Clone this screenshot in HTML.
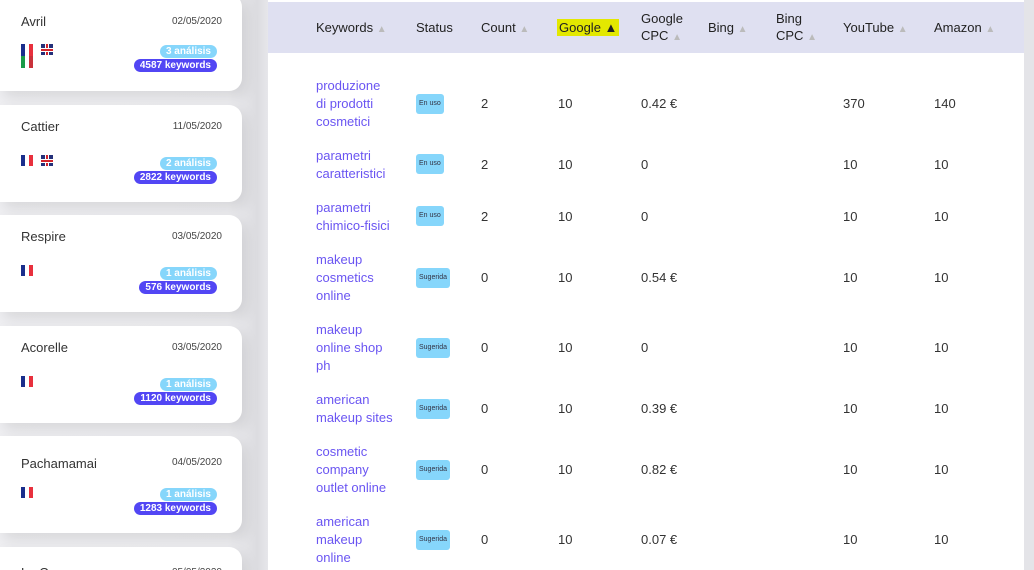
<!DOCTYPE html>
<html><head><meta charset="utf-8"><style>
*{margin:0;padding:0;box-sizing:border-box}
html,body{width:1034px;height:570px;overflow:hidden}
body{position:relative;font-family:"Liberation Sans",sans-serif;background:#e4e4e8;color:#333}
#left{position:absolute;left:0;top:0;width:268px;height:570px;overflow:hidden;background:linear-gradient(90deg,#efeff2 0%,#eeeef1 85%,#dcdce0 96%,#e6e6ea 100%)}
.card{position:absolute;left:0;width:242px;height:97px;background:#fff;border-radius:0 13px 13px 0;box-shadow:4px 6px 14px rgba(0,0,0,0.10)}
.card .n{position:absolute;left:21px;top:14px;font-size:13px;color:#333}
.card .d{position:absolute;right:20px;top:16px;font-size:10px;color:#444}
.fl{position:absolute;left:21px;top:50px;display:flex;gap:8px}
.fr{width:12px;height:11px;background:linear-gradient(90deg,#1a2e8c 0 33%,#fff 33% 66%,#e8303d 66%)}
.uk{width:12px;height:11px;background:#24307a;position:relative;overflow:hidden}
.uk:before{content:"";position:absolute;left:5px;top:0;width:2px;height:11px;background:#d2232a;box-shadow:0 0 0 1px #fff}
.uk:after{content:"";position:absolute;left:0;top:4.5px;width:12px;height:2px;background:#d2232a;box-shadow:0 0 0 1px #fff}
.b1{position:absolute;right:25px;top:52px;background:#86d6fb;color:#fff;font-size:10px;font-weight:bold;padding:0 6px;border-radius:8px;line-height:13px}
.b2{position:absolute;right:25px;top:66px;background:#5246f4;color:#fff;font-size:10px;font-weight:bold;padding:0 6px;border-radius:8px;line-height:13px}
#main{position:absolute;left:268px;top:0;width:756px;height:570px;background:#fff;overflow:hidden}
#hd{position:absolute;left:0;top:2px;width:756px;height:51px;background:#dfe0f1}
.h{position:absolute;font-size:13px;color:#222;line-height:17px}
.ar{color:#bbb;font-size:10px}
.c{position:absolute;font-size:13px;color:#333;line-height:18px}
.k{color:#6a55f2}
.s{position:absolute;font-size:7px;color:#334;background:#86d6fb;border-radius:3px;padding:0 3px;height:20px;line-height:20px}
</style></head><body>
<div id="left">
<div class="card" style="top:-6px"><div class="n" style="top:20px">Avril</div><div class="d" style="top:22px">02/05/2020</div>
<div class="fl" style="top:50px"><div class="fr" style="height:24px;position:relative"><div style="position:absolute;left:0;bottom:0;width:4px;height:12px;background:#1b9a48"></div><div style="position:absolute;left:4px;bottom:0;width:4px;height:12px;background:#fff"></div><div style="position:absolute;left:8px;bottom:0;width:4px;height:12px;background:#c9323b"></div></div><div class="uk"></div></div>
<div class="b1" style="top:51px">3 análisis</div><div class="b2" style="top:65px">4587 keywords</div></div>
<div class="card" style="top:105px"><div class="n">Cattier</div><div class="d">11/05/2020</div><div class="fl"><div class="fr"></div><div class="uk"></div></div><div class="b1">2 análisis</div><div class="b2">2822 keywords</div></div>
<div class="card" style="top:215px"><div class="n">Respire</div><div class="d">03/05/2020</div><div class="fl"><div class="fr"></div></div><div class="b1">1 análisis</div><div class="b2">576 keywords</div></div>
<div class="card" style="top:326px"><div class="n">Acorelle</div><div class="d">03/05/2020</div><div class="fl"><div class="fr"></div></div><div class="b1">1 análisis</div><div class="b2">1120 keywords</div></div>
<div class="card" style="top:436px"><div class="n" style="top:20px">Pachamamai</div><div class="d" style="top:21px">04/05/2020</div><div class="fl" style="top:51px"><div class="fr"></div></div><div class="b1" style="top:52px">1 análisis</div><div class="b2" style="top:66px">1283 keywords</div></div>
<div class="card" style="top:547px"><div class="n" style="top:18px">La Cr</div><div class="d" style="top:20px">05/05/2020</div></div>
</div>
<div id="main">
<div id="hd">
<div class="h" style="left:48px;top:17px">Keywords <span class="ar">▲</span></div>
<div class="h" style="left:148px;top:17px">Status</div>
<div class="h" style="left:213px;top:17px">Count <span class="ar">▲</span></div>
<div class="h" style="left:289px;top:17px;background:#e3e800;padding:0 2px">Google ▲</div>
<div class="h" style="left:373px;top:8px">Google<br>CPC <span class="ar">▲</span></div>
<div class="h" style="left:440px;top:17px">Bing <span class="ar">▲</span></div>
<div class="h" style="left:508px;top:8px">Bing<br>CPC <span class="ar">▲</span></div>
<div class="h" style="left:575px;top:17px">YouTube <span class="ar">▲</span></div>
<div class="h" style="left:666px;top:17px">Amazon <span class="ar">▲</span></div>
</div>
<div class="c k" style="left:48px;top:77px">produzione<br>di prodotti<br>cosmetici</div><div class="s" style="left:148px;top:94px">En uso</div><div class="c" style="left:213px;top:95px">2</div><div class="c" style="left:290px;top:95px">10</div><div class="c" style="left:373px;top:95px">0.42 €</div><div class="c" style="left:575px;top:95px">370</div><div class="c" style="left:666px;top:95px">140</div>
<div class="c k" style="left:48px;top:147px">parametri<br>caratteristici</div><div class="s" style="left:148px;top:154px">En uso</div><div class="c" style="left:213px;top:156px">2</div><div class="c" style="left:290px;top:156px">10</div><div class="c" style="left:373px;top:156px">0</div><div class="c" style="left:575px;top:156px">10</div><div class="c" style="left:666px;top:156px">10</div>
<div class="c k" style="left:48px;top:199px">parametri<br>chimico-fisici</div><div class="s" style="left:148px;top:206px">En uso</div><div class="c" style="left:213px;top:208px">2</div><div class="c" style="left:290px;top:208px">10</div><div class="c" style="left:373px;top:208px">0</div><div class="c" style="left:575px;top:208px">10</div><div class="c" style="left:666px;top:208px">10</div>
<div class="c k" style="left:48px;top:251px">makeup<br>cosmetics<br>online</div><div class="s" style="left:148px;top:268px">Sugerida</div><div class="c" style="left:213px;top:269px">0</div><div class="c" style="left:290px;top:269px">10</div><div class="c" style="left:373px;top:269px">0.54 €</div><div class="c" style="left:575px;top:269px">10</div><div class="c" style="left:666px;top:269px">10</div>
<div class="c k" style="left:48px;top:321px">makeup<br>online shop<br>ph</div><div class="s" style="left:148px;top:338px">Sugerida</div><div class="c" style="left:213px;top:339px">0</div><div class="c" style="left:290px;top:339px">10</div><div class="c" style="left:373px;top:339px">0</div><div class="c" style="left:575px;top:339px">10</div><div class="c" style="left:666px;top:339px">10</div>
<div class="c k" style="left:48px;top:391px">american<br>makeup sites</div><div class="s" style="left:148px;top:399px">Sugerida</div><div class="c" style="left:213px;top:400px">0</div><div class="c" style="left:290px;top:400px">10</div><div class="c" style="left:373px;top:400px">0.39 €</div><div class="c" style="left:575px;top:400px">10</div><div class="c" style="left:666px;top:400px">10</div>
<div class="c k" style="left:48px;top:443px">cosmetic<br>company<br>outlet online</div><div class="s" style="left:148px;top:460px">Sugerida</div><div class="c" style="left:213px;top:461px">0</div><div class="c" style="left:290px;top:461px">10</div><div class="c" style="left:373px;top:461px">0.82 €</div><div class="c" style="left:575px;top:461px">10</div><div class="c" style="left:666px;top:461px">10</div>
<div class="c k" style="left:48px;top:513px">american<br>makeup<br>online</div><div class="s" style="left:148px;top:530px">Sugerida</div><div class="c" style="left:213px;top:531px">0</div><div class="c" style="left:290px;top:531px">10</div><div class="c" style="left:373px;top:531px">0.07 €</div><div class="c" style="left:575px;top:531px">10</div><div class="c" style="left:666px;top:531px">10</div>
</div>
</body></html>
